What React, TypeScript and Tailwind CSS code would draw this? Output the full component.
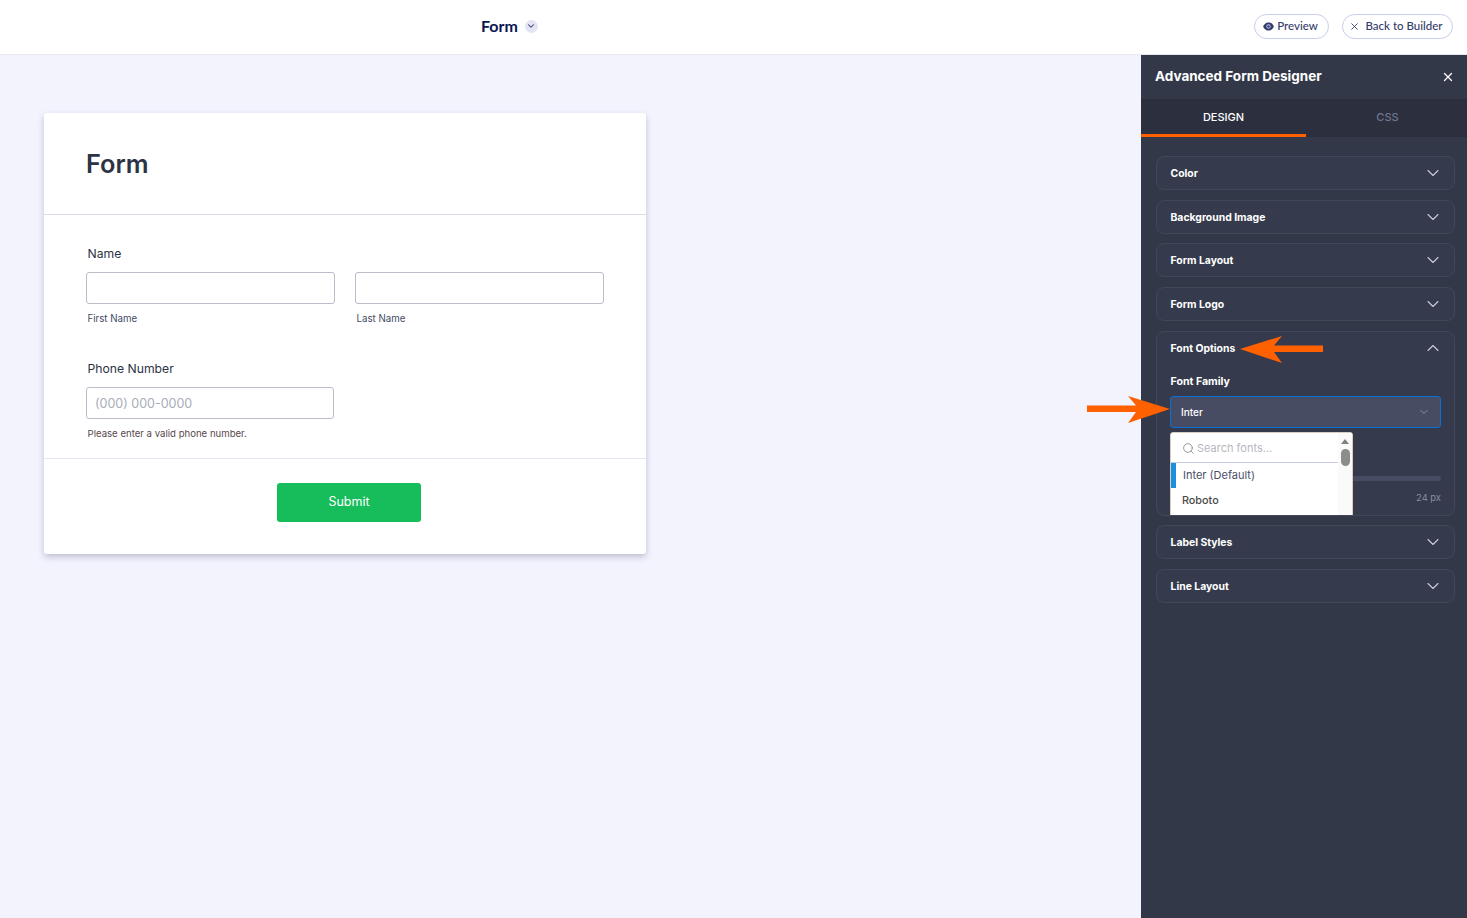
import React, { FC } from "react";
import { ChevronDown, ChevronUp, Search, X } from "lucide-react";

const Section: FC<{ title: string }> = ({ title }) => (
  <div className="flex h-[34px] items-center justify-between rounded-lg border border-[#41465a] bg-[#353a4c] pl-[13.5px] pr-[11px]">
    <span className="pt-[1.5px] text-[10.4px] font-bold text-white">{title}</span>
    <ChevronDown className="h-[20px] w-[20px] text-[#c8cbe0]" strokeWidth={1.3} />
  </div>
);

const FontOptions: FC = () => (
  <div className="relative h-[185px] overflow-hidden rounded-lg border border-[#41465a] bg-[#353a4c]">
    <div className="flex h-[33px] items-center justify-between pl-[13.5px] pr-[11px]">
      <span className="pt-px text-[10.4px] font-bold text-white">Font Options</span>
      <ChevronUp className="h-[20px] w-[20px] text-[#c8cbe0]" strokeWidth={1.3} />
    </div>
    <div className="px-[13px] pt-[8px]">
      <div className="h-[16px] pt-px pl-[0.5px] text-[10.6px] leading-[16px] font-bold text-white">Font Family</div>
      <div className="mt-[7px] flex h-[32px] w-[271px] items-center justify-between rounded-[3px] border border-[#0a6fd8] bg-[#474c62] pl-[10px] pr-[10px]">
        <span className="pt-px text-[10px] font-medium text-white">Inter</span>
        <ChevronDown className="h-[12px] w-[12px] text-[#a6aac0]" strokeWidth={1.5} />
      </div>
      <div className="mt-[48px] ml-[170px] h-[5px] w-[101px] rounded-full bg-[#474c62]" />
      <div className="mt-[10px] w-[271px] text-right text-[9.4px] text-[#8a8ea6]">24 px</div>
    </div>
    <FontList />
  </div>
);

const FontList: FC = () => (
  <div className="absolute top-[100px] left-[13px] flex h-[110px] w-[183px] rounded-t-[3px] border border-[#d8cfc0] bg-white">
    <div className="w-[167px]">
      <div className="flex h-[30px] items-center gap-[2px] border-b border-[#c8cbe6] pl-[11px] pt-[2px]">
        <Search className="h-[13px] w-[13px] text-[#8a8a8a]" strokeWidth={1.6} />
        <span className="text-[11px] text-[#b5b7c0]">Search fonts...</span>
      </div>
      <div className="flex h-[25px] items-center border-l-[5px] border-[#1a8fe0] pl-[7px] text-[11px] text-[#4a4f68]">Inter (Default)</div>
      <div className="flex h-[27px] items-center pl-[11px] text-[10.8px] font-medium text-[#4a4a4a]">Roboto</div>
    </div>
    <div className="flex w-[14px] flex-col items-center bg-[#fafafa] pt-[6px]">
      <div className="h-0 w-0 border-x-[4.5px] border-b-[5px] border-x-transparent border-b-[#808080]" />
      <div className="mt-[5px] h-[17px] w-[9px] rounded-full bg-[#8c8c8c]" />
    </div>
  </div>
);

const Sidebar: FC = () => (
  <aside className="relative flex w-[326px] flex-col bg-[#333849]">
    <div className="flex h-[44px] items-center justify-between pb-[2px] pl-[14px] pr-[12px]">
      <span className="text-[13.5px] font-bold text-white">Advanced Form Designer</span>
      <X className="mt-[2px] h-[14px] w-[14px] text-white" strokeWidth={2.2} />
    </div>
    <div className="flex h-[38px] bg-[#2b2f3e]">
      <div className="flex w-[165px] items-center justify-center border-b-[3px] border-[#ff6100] pt-[2px] text-[11px] font-medium text-white">DESIGN</div>
      <div className="flex flex-1 items-center justify-center pb-px pl-[2px] text-[11px] font-medium text-[#6f7590]">CSS</div>
    </div>
    <div className="flex flex-col gap-[9.7px] pt-[19px] pl-[15px] pr-[12px]">
      <Section title="Color" />
      <Section title="Background Image" />
      <Section title="Form Layout" />
      <Section title="Form Logo" />
      <FontOptions />
      <Section title="Label Styles" />
      <Section title="Line Layout" />
    </div>
  </aside>
);

const Field: FC<{ placeholder?: string; width: string }> = ({ placeholder, width }) => (
  <div className={`flex h-[32px] items-center rounded-[3px] border border-[#b8bdc9] bg-white px-[8px] pt-[2px] text-[12.5px] text-[#a9acb8] ${width}`}>
    {placeholder}
  </div>
);

const FormCard: FC = () => (
  <div className="w-[602px] rounded-[3px] bg-white shadow-[0_3px_6px_rgba(40,45,75,0.25)]">
    <div className="flex h-[102px] items-center border-b border-[#d9dbe6] pl-[42px] pt-[1px]">
      <h1 className="text-[25.3px] font-semibold text-[#2c3345]">Form</h1>
    </div>
    <div className="border-b border-[#e4e5f2] pl-[42px] pr-[42px]">
      <div className="pl-[1.5px] pt-[30px] text-[12.2px] leading-[18px] text-[#2c3345]">Name</div>
      <div className="mt-[9px] flex gap-[20px]">
        <div>
          <Field width="w-[249px]" />
          <div className="mt-[8px] pl-[1.5px] text-[9.7px] leading-[14px] text-[#3f4a66]">First Name</div>
        </div>
        <div>
          <Field width="w-[249px]" />
          <div className="mt-[8px] pl-[1.5px] text-[9.7px] leading-[14px] text-[#3f4a66]">Last Name</div>
        </div>
      </div>
      <div className="pl-[1.5px] pt-[34px] text-[12.2px] leading-[18px] text-[#2c3345]">Phone Number</div>
      <div className="mt-[9px]">
        <Field width="w-[248px]" placeholder="(000) 000-0000" />
      </div>
      <div className="mt-[8px] pb-[17px] pl-[1.5px] text-[9.6px] leading-[14px] text-[#57474e]">Please enter a valid phone number.</div>
    </div>
    <div className="flex h-[95px] justify-center pt-[24px] pl-[8px]">
      <button className="h-[39px] w-[144px] rounded-[3px] bg-[#18bd5b] text-[12.5px] text-white">Submit</button>
    </div>
  </div>
);

const Arrow: FC<{ className: string; flip?: boolean }> = ({ className, flip }) => (
  <svg viewBox="0 0 83 30" className={`absolute h-[30px] w-[83px] ${className}`} style={flip ? { transform: "scaleX(-1)" } : undefined}>
    <path d="M0 11.5 L49 11.5 L41 2 L83 15 L41 29 L49 18 L0 18 Z" fill="#ff6100" />
  </svg>
);

const EyeIcon: FC = () => (
  <svg viewBox="0 0 12 10" className="h-[9px] w-[11px]">
    <path d="M0 5 C2 1 4 .5 6 .5 S10 1 12 5 C10 9 8 9.5 6 9.5 S2 9 0 5 Z" fill="#343c6a" />
    <circle cx="6" cy="5" r="2.4" fill="#c8ceed" />
    <circle cx="6" cy="5" r="1.4" fill="#343c6a" />
  </svg>
);

export default function App() {
  return (
    <div className="relative flex h-[918px] w-[1467px] flex-col overflow-hidden bg-white font-['Inter',sans-serif]">
      <header className="flex h-[55px] shrink-0 items-center border-b border-[#e6e7f0] pb-[2px] font-['Lato',sans-serif]">
        <div className="ml-[481px] flex items-center gap-[7px]">
          <span className="text-[16px] font-bold text-[#0a1551]">Form</span>
          <span className="flex h-[13px] w-[13px] items-center justify-center rounded-full bg-[#e3e5f5]">
            <ChevronDown className="h-[10px] w-[10px] text-[#343c6a]" strokeWidth={2.5} />
          </span>
        </div>
        <div className="ml-auto mr-[14px] flex items-center gap-[13px] text-[11.5px] font-medium text-[#343c6a]">
          <div className="flex h-[25px] w-[75px] items-center justify-center gap-[3px] rounded-full border border-[#c8ceed] pr-[2px]">
            <EyeIcon />
            Preview
          </div>
          <div className="flex h-[25px] w-[111px] items-center justify-center gap-[5px] rounded-full border border-[#c8ceed] pr-[3px]">
            <X className="h-[11px] w-[11px]" strokeWidth={2} />
            Back to Builder
          </div>
        </div>
      </header>
      <div className="flex flex-1 bg-[#f3f3fe]">
        <main className="flex-1 pt-[58px] pl-[44px]">
          <FormCard />
        </main>
        <Sidebar />
      </div>
      <Arrow className="top-[334px] left-[1240px]" flip />
      <Arrow className="top-[394px] left-[1087px]" />
    </div>
  );
}
